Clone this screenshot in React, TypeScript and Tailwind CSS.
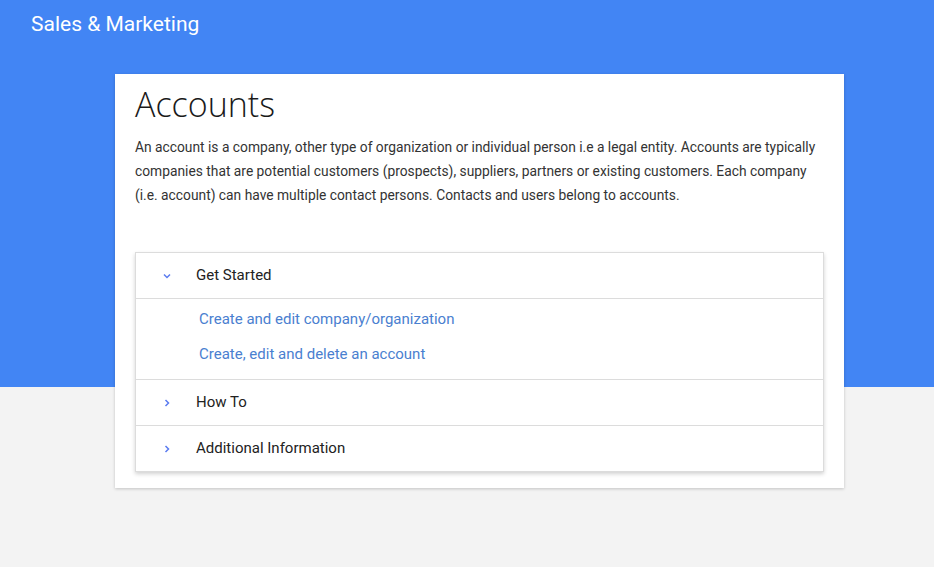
import React from "react";

const Chevron = ({ open }: { open?: boolean }) => (
  <svg width="10" height="10" viewBox="0 0 10 10" className={open ? "" : "-rotate-90"}>
    <path d="M2 3.5 L5 6.5 L8 3.5" fill="none" stroke="#5b7cf0" strokeWidth="1.5" />
  </svg>
);

export default function App() {
  return (
    <div className="min-h-[567px] bg-[#f3f3f3]" style={{ fontFamily: "Roboto, sans-serif" }}>
      <div className="h-[387px] bg-[#4285f4]">
        <div className="pl-[31px] pt-[10px] text-[21px] leading-[28px] text-white">Sales &amp; Marketing</div>
      </div>
      <div className="-mt-[313px] ml-[115px] w-[729px] bg-white px-5 pb-4 pt-[6px] shadow-[0_1px_3px_rgba(0,0,0,0.2)]">
        <h1 className="text-[34px] font-light leading-[48px] text-[#1a1a1a]" style={{ fontFamily: "'Open Sans', sans-serif" }}>
          Accounts
        </h1>
        <p className="mt-[7px] text-[13.8px] leading-[24px] text-[#333]">
          An account is a company, other type of organization or individual person i.e a legal entity. Accounts are typically
          companies that are potential customers (prospects), suppliers, partners or existing customers. Each company
          (i.e. account) can have multiple contact persons. Contacts and users belong to accounts.
        </p>
        <div className="mt-[45px] border border-[#dcdcdc] shadow-[0_2px_4px_rgba(0,0,0,0.18)]">
          <div className="flex h-[46px] items-center border-b border-[#dcdcdc]">
            <div className="flex w-[60px] justify-center pl-[2px]"><Chevron open /></div>
            <span className="text-[15px] text-[#222]">Get Started</span>
          </div>
          <div className="flex h-[81px] flex-col border-b border-[#dcdcdc] pl-[63px] pt-[10px]">
            <a className="text-[15px] leading-[20px] text-[#4a80d0]">Create and edit company/organization</a>
            <a className="mt-[15px] text-[15px] leading-[20px] text-[#4a80d0]">Create, edit and delete an account</a>
          </div>
          <div className="flex h-[46px] items-center border-b border-[#dcdcdc]">
            <div className="flex w-[60px] justify-center pl-[2px]"><Chevron /></div>
            <span className="text-[15px] text-[#222]">How To</span>
          </div>
          <div className="flex h-[45px] items-center">
            <div className="flex w-[60px] justify-center pl-[2px]"><Chevron /></div>
            <span className="text-[15px] text-[#222]">Additional Information</span>
          </div>
        </div>
      </div>
    </div>
  );
}
